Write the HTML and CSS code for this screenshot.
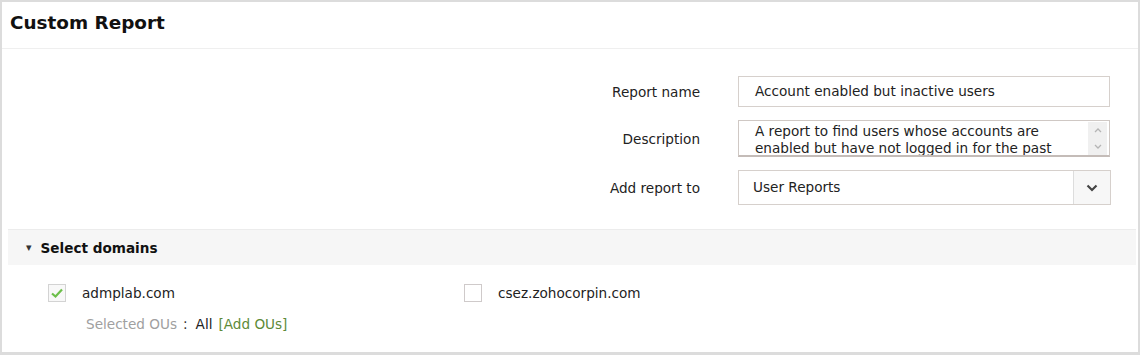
FILE: index.html
```html
<!DOCTYPE html>
<html lang="en">
<head>
    <meta charset="UTF-8">
    <title>Custom Report</title>
    <link rel="stylesheet" href="styles.css">
</head>
<body>
    <div class="page">
        <div class="page-header">Custom Report</div>

        <div class="form">
            <div class="form-row row-name">
                <label class="form-label">Report name</label>
                <div class="text-input">Account enabled but inactive users</div>
            </div>
            <div class="form-row row-desc">
                <label class="form-label">Description</label>
                <div class="text-area">
                    <div class="text-area-body">A report to find users whose accounts are enabled but have not logged in for the past 90 days</div>
                    <div class="scrollbar">
                        <svg width="10" height="8" viewBox="0 0 10 8"><path d="M2 6 L5 3 L8 6" fill="none" stroke="#b5b5b5" stroke-width="1.3"/></svg>
                        <svg width="10" height="8" viewBox="0 0 10 8"><path d="M2 2 L5 5 L8 2" fill="none" stroke="#b5b5b5" stroke-width="1.3"/></svg>
                    </div>
                </div>
            </div>
            <div class="form-row row-select">
                <label class="form-label">Add report to</label>
                <div class="select">
                    <div class="select-value">User Reports</div>
                    <div class="select-arrow">
                        <svg width="12" height="8" viewBox="0 0 12 8"><path d="M1.5 1.5 L6 6 L10.5 1.5" fill="none" stroke="#444" stroke-width="2.2"/></svg>
                    </div>
                </div>
            </div>
        </div>

        <div class="section">
            <div class="section-header">
                <span class="caret">&#9662;</span>
                <span>Select domains</span>
            </div>
            <div class="domains">
                <div class="domain">
                    <div class="domain-line">
                        <span class="checkbox checked">
                            <svg width="14" height="12" viewBox="0 0 14 12"><path d="M2 6.5 L5.5 9.5 L12 2.5" fill="none" stroke="#6cbf4a" stroke-width="2.2"/></svg>
                        </span>
                        <span class="domain-name">admplab.com</span>
                    </div>
                    <div class="ou-line">
                        <span class="ou-label">Selected OUs</span>
                        <span class="ou-sep">:</span>
                        <span class="ou-value">All</span>
                        <a class="ou-add">[Add OUs]</a>
                    </div>
                </div>
                <div class="domain">
                    <div class="domain-line">
                        <span class="checkbox"></span>
                        <span class="domain-name">csez.zohocorpin.com</span>
                    </div>
                </div>
            </div>
        </div>
    </div>
</body>
</html>
```

FILE: styles.css
```css
body {
    margin: 0;
    padding: 0;
    font-family: "DejaVu Sans", Verdana, sans-serif;
    font-size: 13.6px;
    color: #222;
    background-color: #fff;
}
.page {
    width: 1140px;
    height: 355px;
    box-sizing: border-box;
    border: 2px solid #dcdcdc;
    border-bottom-width: 3px;
    background-color: #fff;
    overflow: hidden;
}
.page-header {
    height: 46px;
    line-height: 41px;
    padding-left: 8px;
    font-size: 18.4px;
    font-weight: bold;
    color: #111;
    border-bottom: 1px solid #efefef;
}
.form {
    padding-top: 27px;
    display: flex;
    flex-direction: column;
    gap: 13px;
}
.form-row {
    display: flex;
    align-items: center;
    gap: 38px;
}
.form-label {
    width: 698px;
    text-align: right;
    color: #222;
}
.row-name {
    height: 31px;
}
.row-desc {
    height: 37px;
}
.row-select {
    height: 35px;
}
.text-input {
    width: 372px;
    height: 31px;
    box-sizing: border-box;
    border: 1px solid #d6d0cc;
    padding-left: 16px;
    line-height: 29px;
    color: #222;
}
.text-area {
    width: 372px;
    height: 37px;
    box-sizing: border-box;
    border: 1px solid #cfc8c4;
    border-bottom: 2px solid #c4bcb8;
    display: flex;
    overflow: hidden;
}
.text-area-body {
    flex: 1;
    padding: 2px 20px 0 16px;
    line-height: 17px;
    color: #222;
}
.scrollbar {
    width: 19px;
    margin: 1px 2px 0 0;
    background-color: #f0f0f0;
    display: flex;
    flex-direction: column;
    align-items: center;
    justify-content: space-around;
}
.select {
    width: 373px;
    height: 35px;
    box-sizing: border-box;
    border: 1px solid #d6d0cc;
    display: flex;
}
.select-value {
    flex: 1;
    padding-left: 14px;
    line-height: 33px;
    color: #222;
}
.select-arrow {
    width: 36px;
    border-left: 1px solid #ddd;
    background-color: #f7f7f7;
    display: flex;
    align-items: center;
    justify-content: center;
}
.section {
    margin: 24px 2px 0 6px;
}
.section-header {
    height: 36px;
    box-sizing: border-box;
    border-top: 1px solid #ececec;
    background-color: #f6f6f6;
    display: flex;
    align-items: center;
    gap: 9px;
    padding-left: 18px;
    font-weight: bold;
    color: #111;
}
.caret {
    font-size: 11px;
    color: #333;
}
.domains {
    display: flex;
    padding: 19px 0 0 40px;
}
.domain {
    width: 416px;
}
.domain-line {
    display: flex;
    align-items: center;
    gap: 16px;
    height: 18px;
}
.checkbox {
    width: 18px;
    height: 18px;
    box-sizing: border-box;
    border: 1px solid #cfcaca;
    display: flex;
    align-items: center;
    justify-content: center;
    background-color: #fff;
}
.checkbox.checked {
    border-color: #d3d3d3;
    background-color: #f8f8f8;
}
.domain-name {
    color: #222;
}
.ou-line {
    margin-top: 14px;
    padding-left: 38px;
    display: flex;
    gap: 6px;
}
.ou-label {
    color: #a0a0a0;
}
.ou-sep {
    color: #333;
    margin-right: 2px;
}
.ou-value {
    color: #222;
}
.ou-add {
    color: #5d8a38;
}
```
